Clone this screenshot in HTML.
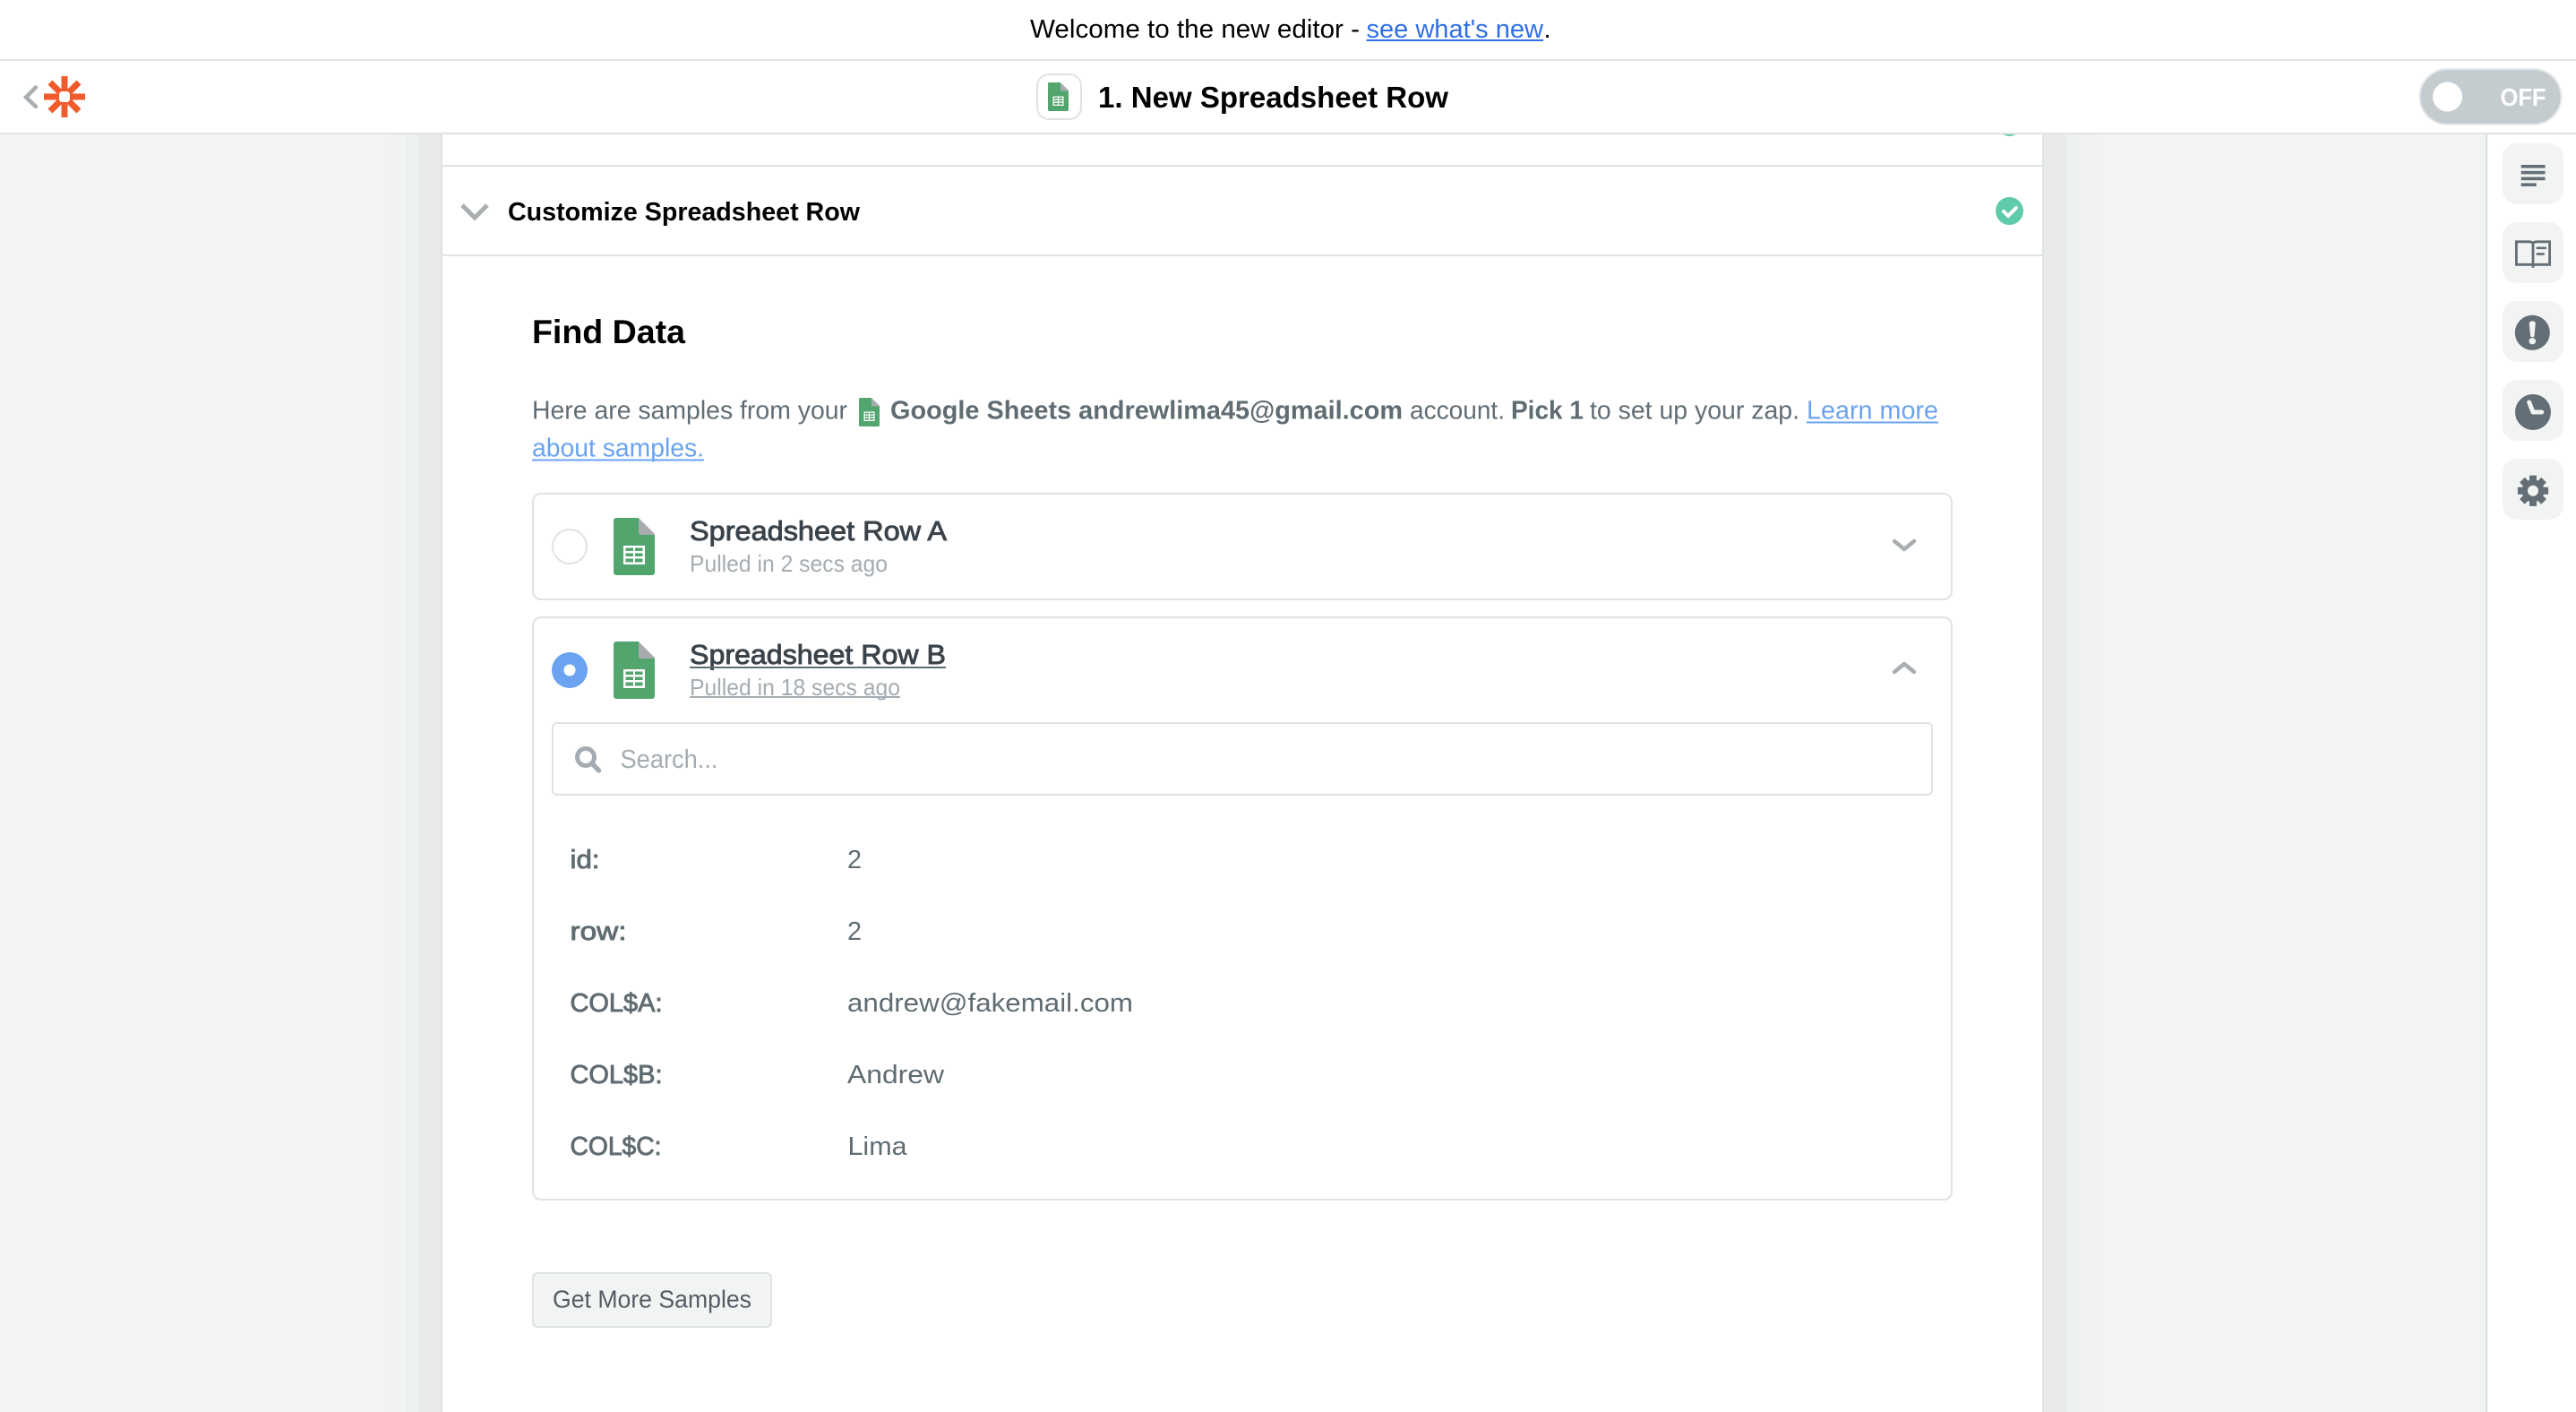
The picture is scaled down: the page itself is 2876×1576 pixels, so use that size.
<!DOCTYPE html>
<html lang="en">
<head>
<meta charset="utf-8">
<title>1. New Spreadsheet Row</title>
<style>
html,body{margin:0;padding:0;width:2876px;height:1576px;overflow:hidden;background:#f2f4f4}
div{position:absolute;box-sizing:border-box}
svg{position:absolute;left:0;top:0}
text{font-family:"Liberation Sans",sans-serif;white-space:pre}
.b{font-weight:700}
.s{stroke-width:.9px}
.shl{left:468px;top:150px;width:24px;height:1426px;background:#e8eaea}
.shl2{left:453px;top:150px;width:15px;height:1426px;background:#ecf0f1}
.shl3{left:430px;top:150px;width:23px;height:1426px;background:#f0f2f3}
.shr{left:2282px;top:150px;width:25px;height:1426px;background:#e8eaea}
.shr2{left:2307px;top:150px;width:15px;height:1426px;background:#ecf0f1}
.shr3{left:2322px;top:150px;width:23px;height:1426px;background:#f0f2f3}
.side{left:2775px;top:150px;width:101px;height:1426px;background:#fff;border-left:2px solid #d8dde0}
.sb{left:2794px;width:68px;height:68px;background:#f2f4f4;border-radius:16px}
.card{background:#fff;border:2px solid #dfe3e6;border-radius:10px}
</style>
</head>
<body>
<div style="left:0;top:0;width:2876px;height:66px;background:#fff"></div>
<div style="left:0;top:66px;width:2876px;height:84px;background:#fff;border-top:2px solid #dfe3e6;border-bottom:2px solid #dfe3e6"></div>

<div class="shl3"></div><div class="shl2"></div><div class="shl"></div>
<div class="shr3"></div><div class="shr2"></div><div class="shr"></div>

<div style="left:492px;top:150px;width:1790px;height:1426px;background:#fff;border-left:2px solid #dfe3e6;border-right:2px solid #dfe3e6"></div>
<div style="left:494px;top:184px;width:1786px;height:2px;background:#dfe3e6"></div>
<div style="left:494px;top:284px;width:1786px;height:2px;background:#dfe3e6"></div>

<div class="side"></div>
<div class="sb" style="top:160px"></div>
<div class="sb" style="top:248px"></div>
<div class="sb" style="top:336px"></div>
<div class="sb" style="top:424px"></div>
<div class="sb" style="top:512px"></div>

<div class="card" style="left:594px;top:550px;width:1586px;height:120px"></div>
<div class="card" style="left:594px;top:688px;width:1586px;height:652px"></div>
<div class="card" style="left:616px;top:806px;width:1542px;height:82px;border-radius:6px"></div>
<div class="card" style="left:594px;top:1420px;width:268px;height:62px;border-radius:6px;background:#f2f4f4"></div>

<svg width="2876" height="1576" viewBox="0 0 2876 1576" xmlns="http://www.w3.org/2000/svg">
<defs>
<symbol id="sheet" viewBox="0 0 46 64">
<path fill="#52a56d" d="M3 0H28V15Q28 19 32 19H46V61a3 3 0 0 1-3 3H3a3 3 0 0 1-3-3V3a3 3 0 0 1 3-3Z"/>
<path fill="#a9acae" d="M28 0L46 18V19H32Q28 19 28 15Z"/>
<rect x="11" y="31" width="24" height="21" fill="#fff"/>
<g fill="#52a56d">
<rect x="13.5" y="33.5" width="8.5" height="3.5"/><rect x="24" y="33.5" width="8.5" height="3.5"/>
<rect x="13.5" y="39.5" width="8.5" height="3.5"/><rect x="24" y="39.5" width="8.5" height="3.5"/>
<rect x="13.5" y="45.5" width="8.5" height="4"/><rect x="24" y="45.5" width="8.5" height="4"/>
</g>
</symbol>
</defs>

<!-- banner -->
<text x="1150" y="42" font-size="29" fill="#000" textLength="368" lengthAdjust="spacingAndGlyphs">Welcome to the new editor -</text>
<text x="1525.5" y="42" font-size="29" fill="#2f6fe8" textLength="197.5" lengthAdjust="spacingAndGlyphs">see what's new</text>
<rect x="1525.5" y="44" width="197.5" height="2" fill="#2f6fe8"/>
<text x="1723.5" y="42" font-size="29" fill="#000">.</text>

<!-- header -->
<path d="M40 97.5L29 108.5L40 119" fill="none" stroke="#a9aeb1" stroke-width="4.5" stroke-linecap="round"/>
<g fill="none" stroke="#f15a2b" stroke-width="7">
<path d="M72 85V131"/><path d="M49 108H95"/><path d="M56 92L88 124"/><path d="M88 92L56 124"/>
</g>
<rect x="66" y="102" width="12" height="12" rx="3.5" fill="#fff"/>

<rect x="1158" y="83" width="49" height="50" rx="13" fill="#fff" stroke="#dfe3e6" stroke-width="2"/>
<use href="#sheet" x="1170" y="92" width="23" height="32"/>
<text x="1226" y="120" font-size="33" class="b" fill="#000" textLength="391" lengthAdjust="spacingAndGlyphs">1. New Spreadsheet Row</text>

<rect x="2701.5" y="77" width="158" height="62" rx="31" fill="#c5ccd0" stroke="#e6e9eb" stroke-width="2"/>
<circle cx="2732.5" cy="108" r="16.5" fill="#fff"/>
<text x="2791.5" y="118" font-size="28" class="b" fill="#fff" textLength="51" lengthAdjust="spacingAndGlyphs">OFF</text>

<!-- sidebar icons -->
<g fill="#636e76">
<rect x="2814.7" y="184" width="26.8" height="3.6"/>
<rect x="2814.7" y="190.8" width="26.8" height="3.6"/>
<rect x="2814.7" y="197.6" width="26.8" height="3.6"/>
<rect x="2814.7" y="204.4" width="17" height="3.6"/>
</g>
<g fill="none" stroke="#636e76" stroke-width="2.8">
<path d="M2809.4 269.8H2824Q2827 270 2828 271.5V295.3H2809.4Z"/>
<path d="M2828 271.5Q2829 270 2832 269.8H2846.6V295.3H2828V298.7"/>
</g>
<rect x="2831.7" y="275.5" width="11.3" height="2.6" fill="#636e76"/>
<rect x="2831.7" y="282.2" width="9" height="2.6" fill="#636e76"/>

<circle cx="2827.3" cy="371.3" r="19.5" fill="#636e76"/>
<path d="M2823.8 361.2a3.5 3 0 0 1 7 0L2829.5 375a2.2 1.2 0 0 1-4.4 0Z" fill="#f2f4f4"/>
<circle cx="2827.3" cy="380.8" r="3.7" fill="#f2f4f4"/>

<circle cx="2828" cy="460" r="20" fill="#636e76"/>
<path d="M2823.7 449L2828 460H2837.7" fill="none" stroke="#f2f4f4" stroke-width="5" stroke-linejoin="round" stroke-linecap="round"/>

<g fill="#636e76">
<circle cx="2828" cy="547.8" r="12.5"/>
<rect x="2824" y="530.7" width="8" height="34.2"/>
<rect x="2824" y="530.7" width="8" height="34.2" transform="rotate(45 2828 547.8)"/>
<rect x="2824" y="530.7" width="8" height="34.2" transform="rotate(90 2828 547.8)"/>
<rect x="2824" y="530.7" width="8" height="34.2" transform="rotate(135 2828 547.8)"/>
</g>
<circle cx="2828" cy="547.8" r="6" fill="#f2f4f4"/>

<!-- collapsed section peek and customize row -->
<path d="M2236.5 150H2250.5Q2247 152 2243.5 152Q2240 152 2236.5 150Z" fill="#5fcbaa"/>
<path d="M516 229L530 243L544 229" fill="none" stroke="#a9aeb1" stroke-width="5"/>
<text x="567" y="246" font-size="29" class="b" fill="#000" textLength="393" lengthAdjust="spacingAndGlyphs">Customize Spreadsheet Row</text>
<circle cx="2243.5" cy="235.5" r="15.5" fill="#5fcbaa"/>
<path d="M2237 236L2242 241L2251 232" fill="none" stroke="#fff" stroke-width="4" stroke-linecap="round" stroke-linejoin="round"/>

<!-- find data -->
<text x="594" y="383" font-size="37" class="b" fill="#000" textLength="171" lengthAdjust="spacingAndGlyphs">Find Data</text>
<text x="594" y="467.5" font-size="29" fill="#616d74" textLength="352" lengthAdjust="spacingAndGlyphs">Here are samples from your</text>
<use href="#sheet" x="959" y="444" width="23" height="32"/>
<text x="994" y="467.5" font-size="29" class="b" fill="#5f6c72" textLength="572" lengthAdjust="spacingAndGlyphs">Google Sheets andrewlima45@gmail.com</text>
<text x="1574" y="467.5" font-size="29" fill="#616d74" textLength="106" lengthAdjust="spacingAndGlyphs">account.</text>
<text x="1687" y="467.5" font-size="29" class="b" fill="#5f6c72" textLength="81" lengthAdjust="spacingAndGlyphs">Pick 1</text>
<text x="1775" y="467.5" font-size="29" fill="#616d74" textLength="234" lengthAdjust="spacingAndGlyphs">to set up your zap.</text>
<text x="2017" y="467.5" font-size="29" fill="#6aa3f0" textLength="147" lengthAdjust="spacingAndGlyphs">Learn more</text>
<rect x="2017" y="470.5" width="147" height="2" fill="#6aa3f0"/>
<text x="594" y="509.5" font-size="29" fill="#6aa3f0" textLength="192" lengthAdjust="spacingAndGlyphs">about samples.</text>
<rect x="594" y="512.5" width="192" height="2" fill="#6aa3f0"/>

<!-- row A -->
<circle cx="636" cy="610" r="19" fill="#fff" stroke="#dfe3e6" stroke-width="2"/>
<use href="#sheet" x="685" y="578" width="46" height="64"/>
<text x="770" y="603" font-size="31" class="s" fill="#3a424a" stroke="#3a424a" textLength="287" lengthAdjust="spacingAndGlyphs">Spreadsheet Row A</text>
<text x="770" y="638" font-size="26" fill="#a5acb1" textLength="221" lengthAdjust="spacingAndGlyphs">Pulled in 2 secs ago</text>
<path d="M2115 604L2126 613L2137 604" fill="none" stroke="#a9aeb1" stroke-width="4.5" stroke-linecap="round" stroke-linejoin="round"/>

<!-- row B -->
<circle cx="636" cy="748" r="20" fill="#6ba3f0"/>
<circle cx="636" cy="748" r="6.5" fill="#fff"/>
<use href="#sheet" x="685" y="716" width="46" height="64"/>
<text x="770" y="741" font-size="31" class="s" fill="#3a424a" stroke="#3a424a" textLength="286" lengthAdjust="spacingAndGlyphs">Spreadsheet Row B</text>
<rect x="770" y="744" width="286" height="2" fill="#5f6c72"/>
<text x="770" y="776" font-size="26" fill="#a5acb1" textLength="235" lengthAdjust="spacingAndGlyphs">Pulled in 18 secs ago</text>
<rect x="770" y="777" width="235" height="2" fill="#a5acb1"/>
<path d="M2115 750L2126 741L2137 750" fill="none" stroke="#a9aeb1" stroke-width="4.5" stroke-linecap="round" stroke-linejoin="round"/>

<!-- search -->
<circle cx="654" cy="845" r="9.5" fill="none" stroke="#a5acb1" stroke-width="5"/>
<path d="M661 852L668.5 860" stroke="#a5acb1" stroke-width="5.5" stroke-linecap="round"/>
<text x="692.5" y="857" font-size="29" fill="#a5acb1" textLength="109" lengthAdjust="spacingAndGlyphs">Search...</text>

<!-- data rows -->
<g font-size="29" fill="#5f6c72">
<text x="636.5" y="969" class="s" stroke="#5f6c72" textLength="33" lengthAdjust="spacingAndGlyphs">id:</text>
<text x="636.5" y="1049" class="s" stroke="#5f6c72" textLength="63" lengthAdjust="spacingAndGlyphs">row:</text>
<text x="636.5" y="1129" class="s" stroke="#5f6c72" textLength="103" lengthAdjust="spacingAndGlyphs">COL$A:</text>
<text x="636.5" y="1209" class="s" stroke="#5f6c72" textLength="103" lengthAdjust="spacingAndGlyphs">COL$B:</text>
<text x="636.5" y="1289" class="s" stroke="#5f6c72" textLength="102" lengthAdjust="spacingAndGlyphs">COL$C:</text>
<text x="946" y="969" textLength="16" lengthAdjust="spacingAndGlyphs">2</text>
<text x="946" y="1049" textLength="16" lengthAdjust="spacingAndGlyphs">2</text>
<text x="946" y="1129" textLength="319" lengthAdjust="spacingAndGlyphs">andrew@fakemail.com</text>
<text x="946" y="1209" textLength="108" lengthAdjust="spacingAndGlyphs">Andrew</text>
<text x="946.5" y="1289" textLength="66" lengthAdjust="spacingAndGlyphs">Lima</text>
</g>

<!-- button -->
<text x="617" y="1459.5" font-size="28" fill="#545d64" textLength="222" lengthAdjust="spacingAndGlyphs">Get More Samples</text>
</svg>
</body>
</html>
